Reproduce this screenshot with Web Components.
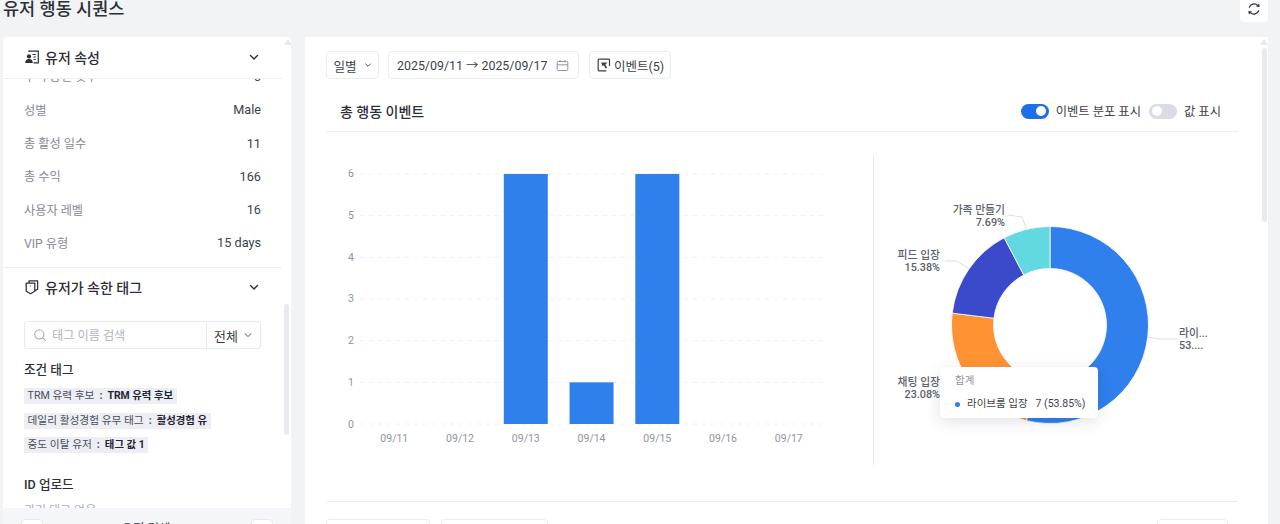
<!DOCTYPE html>
<html lang="ko"><head><meta charset="utf-8"><title>유저 행동 시퀀스</title>
<style>
html,body{margin:0;padding:0;height:524px;overflow:hidden;background:#f2f3f5;font-family:Roboto,"Noto Sans CJK KR",sans-serif;color:#2b2f38}
</style></head><body>
<seq-page></seq-page>
<script>
const ICON={
chev:'<svg width="12" height="12" viewBox="0 0 12 12" fill="none" stroke="currentColor" stroke-width="1.4" stroke-linecap="round" stroke-linejoin="round"><path d="M2.5 4.5 6 8l3.5-3.5"/></svg>',
card:'<svg width="16" height="16" viewBox="0 0 16 16" fill="none"><path d="M5 3V2.2h9.3v11.6H9.5" stroke="#2b2f38" stroke-width="1.2"/><path d="M8.5 5.5h3.3M9.5 8h2.3M9.5 10.5h2.3" stroke="#2b2f38" stroke-width="1.1"/><circle cx="5" cy="7.4" r="2.1" fill="#2b2f38"/><path d="M1.2 14c0-2.6 1.4-4 3.8-4s3.8 1.4 3.8 4z" fill="#2b2f38"/></svg>',
tag:'<svg width="16" height="16" viewBox="0 0 16 16" fill="none" stroke="#2b2f38" stroke-width="1.25" stroke-linejoin="round"><path d="M2.2 4.2h8.6v8L6.5 14.8l-4.3-2.6z"/><path d="M5 4V1.8h8.6v8.4l-2.8 1.6"/><circle cx="6.5" cy="7" r=".6" fill="#2b2f38" stroke="none"/></svg>',
search:'<svg width="14" height="14" viewBox="0 0 14 14" fill="none" stroke="#a9adb8" stroke-width="1.1" stroke-linecap="round"><circle cx="6.3" cy="6.3" r="4.6"/><path d="m9.8 9.8 2.7 2.7"/></svg>',
cal:'<svg width="13" height="13" viewBox="0 0 13 13" fill="none" stroke="#8f939e" stroke-width="1"><rect x="1.2" y="2.5" width="10.6" height="9" rx="1"/><path d="M1.2 5.8h10.6M4 1v2.4M9 1v2.4"/></svg>',
event:'<svg width="14" height="14" viewBox="0 0 14 14" fill="none"><path d="M12.5 7.5V2a.8.8 0 0 0-.8-.8H2a.8.8 0 0 0-.8.8v10a.8.8 0 0 0 .8.8h7" stroke="#3a3f4b" stroke-width="1.2" stroke-linecap="round"/><path d="M4.2 4.4h6.2L8.4 6.6l1.8 3.4-1.6.6-1.7-3.4-1.4 1z" fill="#3a3f4b"/></svg>',
refresh:'<svg width="14" height="14" viewBox="0 0 14 14" fill="none"><path d="M2.2 5.6A5 5 0 0 1 10.6 3.4" stroke="#2b2f38" stroke-width="1.3"/><path d="M11.8 8.4A5 5 0 0 1 3.4 10.6" stroke="#2b2f38" stroke-width="1.3"/><path d="M9 4.6 12.6 5 12.2 1.4z" fill="#2b2f38"/><path d="M5 9.4 1.4 9 1.8 12.6z" fill="#2b2f38"/></svg>'
};
function def(name,css,html,init){
  customElements.define(name,class extends HTMLElement{
    connectedCallback(){
      if(this.shadowRoot)return;
      const r=this.attachShadow({mode:'open'});
      r.innerHTML='<style>'+css+'</style>'+(typeof html==='function'?html(this):html);
      if(init)init(this,r);
    }
  });
}
const A=(e,n,d='')=>e.getAttribute(n)??d;

def('prop-row',`:host{display:flex;justify-content:space-between;align-items:center;height:33.3px;font-size:12.2px}
.l{color:#868a94}.v{color:#3a3f4b;font-size:12.7px}`,
e=>`<span class="l">${A(e,'label')}</span><span class="v">${A(e,'value')}</span>`);

def('tag-chip',`:host{display:block;height:16px;margin-bottom:8.5px}
span{display:inline-flex;align-items:center;height:16px;background:#eceef3;padding:0 3.5px;font-size:10.7px;color:#4a4f5c;white-space:nowrap;line-height:16px}
b{font-weight:700;color:#1f2430;margin-left:4px;font-size:10.4px}i{font-style:normal;font-weight:700;margin:0 1px 0 5px}`,
e=>`<span>${A(e,'k')}<i>:</i><b>${A(e,'v')}</b></span>`);

def('panel-head',`:host{display:flex;align-items:center;height:40px;font-size:14px;font-weight:500;color:#2b2f38;gap:4px}
.i{width:16px;height:16px;display:flex}.t{flex:1}.c{display:flex;margin-right:1px;color:#2b2f38}`,
e=>`<span class="i">${ICON[A(e,'icon')]}</span><span class="t" style="margin-left:1px">${A(e,'title')}</span><span class="c">${ICON.chev}</span>`);

def('tool-btn',`:host{display:inline-flex;align-items:center;height:26px;border:1px solid #ebecf0;border-radius:4px;background:#fff;font-size:12.5px;color:#3a3f4b;box-sizing:content-box;white-space:nowrap}`,
'<slot></slot>');

def('toggle-switch',`:host{display:inline-block;width:28px;height:15px;border-radius:8px;background:#d9dce3;position:relative}
:host([on]){background:#1c6fe8}
i{position:absolute;top:2.5px;left:2.5px;width:10px;height:10px;border-radius:50%;background:#fff}
:host([on]) i{left:15.5px}`,'<i></i>');

def('bar-chart',`:host{display:block;width:547px;height:309px;border-right:1px solid #e8e9ed;box-sizing:content-box}
svg{display:block}text{font-family:Roboto,sans-serif;font-size:10.5px;fill:#8f94a1}`,
()=>{
  let s='<svg width="547" height="309" viewBox="326 156 547 309">';
  for(let i=0;i<=6;i++){const y=424-i*41.67;
    s+=`<line x1="360" x2="823" y1="${y}" y2="${y}" stroke="#eef0f3" stroke-dasharray="4 5"/>`;
    s+=`<text x="351" y="${y+3.5}" text-anchor="middle">${i}</text>`;}
  const v=[0,0,6,1,6,0,0];
  v.forEach((n,i)=>{const c=394.3+i*65.75;
    if(n)s+=`<rect x="${c-22}" y="${424-n*41.67}" width="44" height="${n*41.67}" fill="#2f7fed"/>`;
    s+=`<text x="${c}" y="442" text-anchor="middle">09/${11+i}</text>`;});
  return s+'</svg>';
});

def('donut-chart',`:host{display:block;position:relative;width:364px;height:309px}
svg{display:block}text{font-size:10.8px;fill:#5b606e;font-weight:500;font-family:Roboto,"Noto Sans CJK KR",sans-serif}
.tip{position:absolute;left:66px;top:211px;width:158px;height:51px;background:#fff;border-radius:4px;box-shadow:0 4px 16px rgba(30,40,70,.13);box-sizing:border-box;padding:6px 15px 0;font-size:10.5px;color:#3a3f4b}
.h{color:#8f94a1;line-height:16px}.r{display:flex;align-items:center;margin-top:7px;line-height:16px;white-space:nowrap}
.d{flex:none;width:5px;height:5px;border-radius:50%;background:#2f7fed;margin:0 7px 0 0}.n{margin-left:8px}`,
()=>{
  const cx=1050,cy=325,R=98.5,r=56.5,data=[[7,'#2f7fed'],[3,'#ff9233'],[2,'#3a4acb'],[1,'#62d9e0']];
  let a=-Math.PI/2,s='<svg width="364" height="309" viewBox="874 156 364 309">';
  const P=(rad,t)=>(cx+rad*Math.cos(t)).toFixed(2)+' '+(cy+rad*Math.sin(t)).toFixed(2);
  data.forEach(([n,c])=>{const b=a+n/13*2*Math.PI,l=(b-a)>Math.PI?1:0;
    s+=`<path d="M${P(R,a)}A${R} ${R} 0 ${l} 1 ${P(R,b)}L${P(r,b)}A${r} ${r} 0 ${l} 0 ${P(r,a)}Z" fill="${c}" stroke="#fff" stroke-width=".8"/>`;a=b;});
  const line=d=>`<path d="${d}" fill="none" stroke="#dcdee4"/>`;
  s+=line('M1008 215L1022 217L1026 228')+line('M945 261H957L968 268')+line('M1148 337L1160 339H1177');
  const T=(x,y,t,an)=>`<text x="${x}" y="${y}" text-anchor="${an}">${t}</text>`;
  s+=T(1005,214,'가족 만들기','end')+T(1005,225.5,'7.69%','end');
  s+=T(940,259,'피드 입장','end')+T(940,270.5,'15.38%','end');
  s+=T(940,386,'채팅 입장','end')+T(940,397.5,'23.08%','end');
  s+=T(1179,337,'라이...','start')+T(1179,348.5,'53....','start');
  return s+`</svg><div class="tip"><div class="h">합계</div><div class="r"><span class="d"></span><span>라이브룸 입장</span><span class="n">7 (53.85%)</span></div></div>`;
});

def('side-panel',`:host{display:flex;flex-direction:column;position:relative;width:288px;height:487px;background:#fff;border-radius:4px 4px 0 0;overflow:hidden}
.head{height:42px;box-sizing:border-box;flex:none;width:279px;padding:0 21px;border-bottom:1px solid #eceef1;background:#fff}
.scroll{flex:none;height:429px;width:279px;overflow:hidden;box-sizing:border-box}
.in{margin-top:-19.2px;padding:0}
.rows{padding:0 21px 7.5px}
.sec{border-top:1px solid #eceef1;padding:0 21px}
.sec panel-head{margin-top:-1px}
.search{display:flex;height:28px;border:1px solid #e8e9ed;border-radius:3px;margin-top:14px;box-sizing:border-box;font-size:12.2px}
.inp{flex:1;display:flex;align-items:center;gap:5px;padding-left:8px;color:#b0b3bd;border-right:1px solid #e8e9ed}
.all{width:53px;display:flex;align-items:center;justify-content:center;gap:5px;color:#3a3f4b;font-size:13px}
.all svg{width:10px;height:10px;color:#8f939e}
h4{margin:0;font-size:12.6px;font-weight:500;color:#2b2f38;line-height:18px}
.t1{margin-top:12px;margin-bottom:5px}
.t2{margin-top:26.5px}
.none{font-size:12px;color:#a9adb8;margin-top:8px;line-height:18px}
.foot{flex:1;background:#f5f6f9;display:flex;justify-content:space-between;align-items:flex-start;padding:11px 18px 0;box-sizing:border-box;width:288px;font-size:12.5px;color:#3a3f4b;overflow:hidden}
.foot i{display:block;width:22px;height:24px;background:#fff;border:1px solid #e8e9ed;border-radius:4px;box-sizing:border-box}
.foot span{line-height:16px;margin-top:2px;margin-left:-2px}
.up{position:absolute;left:281px;top:2px;border:4px solid transparent;border-bottom:6px solid #e9eaef;border-top:0}
.th{position:absolute;left:281px;top:267px;width:5px;height:131px;border-radius:3px;background:#e9eaef}`,
`<div class="head"><panel-head icon="card" title="유저 속성"></panel-head></div>
<div class="scroll"><div class="in">
<div class="rows">
<prop-row label="누적 충전 횟수" value="6"></prop-row>
<prop-row label="성별" value="Male"></prop-row>
<prop-row label="총 활성 일수" value="11"></prop-row>
<prop-row label="총 수익" value="166"></prop-row>
<prop-row label="사용자 레벨" value="16"></prop-row>
<prop-row label="VIP 유형" value="15 days"></prop-row>
</div>
<div class="sec">
<panel-head icon="tag" title="유저가 속한 태그"></panel-head>
<div class="search"><div class="inp">${ICON.search}<span>태그 이름 검색</span></div><div class="all">전체 ${ICON.chev}</div></div>
<h4 class="t1">조건 태그</h4>
<tag-chip k="TRM 유력 후보" v="TRM 유력 후보"></tag-chip>
<tag-chip k="데일리 활성경험 유무 태그" v="활성경험 유"></tag-chip>
<tag-chip k="중도 이탈 유저" v="태그 값 1"></tag-chip>
<h4 class="t2">ID 업로드</h4>
<div class="none">관리 태그 없음</div>
</div>
</div></div>
<div class="foot"><i></i><span>유저 리셋</span><i></i></div>
<div class="up"></div><div class="th"></div>`);

def('main-panel',`:host{display:block;position:relative;width:963px;height:487px;background:#fff;overflow:hidden;box-sizing:border-box;padding:14px 0 0 21px}
.wrap{width:912px}
.tools{display:flex;gap:9px;height:28px}
.b1{width:53px;justify-content:center;gap:7px;box-sizing:border-box;height:28px;font-size:12.6px}
.b1 svg{width:8px;height:8px}
.b2{width:191px;box-sizing:border-box;height:28px;padding:0 9px 0 8px;justify-content:space-between;font-size:12.4px}
.b3{width:82px;box-sizing:border-box;height:28px;padding:0 0 0 7px;gap:3px;margin-left:1px}
.title{display:flex;align-items:center;height:40px;margin-top:12px;border-bottom:1px solid #eceef1;padding-left:14px;box-sizing:content-box}
.title h3{margin:0;flex:1;font-size:14px;font-weight:500;color:#2b2f38}
.sw{display:flex;align-items:center;font-size:12.3px;color:#3a3f4b;margin-right:17px}
.sw span{margin:0 8px 0 7px}.sw span:last-child{margin-right:0}
.charts{display:flex;height:345px;padding-top:24px;border-bottom:1px solid #eceef1}
.bottom{display:flex;gap:11px;margin-top:17px}
.bottom tool-btn{height:26px;display:inline-flex}
.w1{width:104px;box-sizing:border-box}.w2{width:107px;box-sizing:border-box}.w3{width:71px;margin-left:auto;margin-right:10px;box-sizing:border-box}
.up{position:absolute;left:955px;top:2px;border:4px solid transparent;border-bottom:6px solid #e9eaef;border-top:0}
.th{position:absolute;left:957px;top:11px;width:5px;height:174px;border-radius:3px;background:#e9eaef}`,
`<div class="wrap">
<div class="tools">
<tool-btn class="b1">일별 ${ICON.chev}</tool-btn>
<tool-btn class="b2"><span>2025/09/11 → 2025/09/17</span>${ICON.cal}</tool-btn>
<tool-btn class="b3">${ICON.event}<span>이벤트(5)</span></tool-btn>
</div>
<div class="title"><h3>총 행동 이벤트</h3>
<div class="sw"><toggle-switch on></toggle-switch><span>이벤트 분포 표시</span><toggle-switch></toggle-switch><span>값 표시</span></div></div>
<div class="charts"><bar-chart></bar-chart><donut-chart></donut-chart></div>
<div class="bottom"><tool-btn class="w1"></tool-btn><tool-btn class="w2"></tool-btn><tool-btn class="w3"></tool-btn></div>
</div>
<div class="up"></div><div class="th"></div>`);

def('seq-page',`:host{display:block;width:1280px;height:524px;overflow:hidden}
header{display:flex;justify-content:space-between;align-items:flex-start;height:37px;padding:0 12px 0 3px;box-sizing:border-box}
h1{margin:-5px 0 0;font-size:17.5px;font-weight:500;line-height:28px;color:#2b2f38;white-space:nowrap}
.ref{width:28px;height:28px;margin-top:-6px;background:#fff;border-radius:4px;display:flex;align-items:center;justify-content:center;padding-top:2px;box-sizing:border-box}
.main{display:flex;gap:14px;padding-left:3px}`,
`<header><h1>유저 행동 시퀀스</h1><div class="ref">${ICON.refresh}</div></header>
<div class="main"><side-panel></side-panel><main-panel></main-panel></div>`);
</script>
</body></html>
